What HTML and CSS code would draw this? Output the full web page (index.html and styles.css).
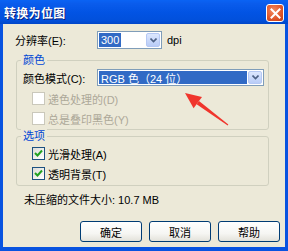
FILE: index.html
```html
<!DOCTYPE html>
<html>
<head>
<meta charset="utf-8">
<link rel="stylesheet" href="styles.css">
</head>
<body>
<div class="window">
  <div class="titlebar">
    <span class="title">转换为位图</span>
    <span class="close"><svg width="11" height="11" viewBox="0 0 11 11"><path d="M1.5 1.5 L9.5 9.5 M9.5 1.5 L1.5 9.5" stroke="#fff" stroke-width="2" stroke-linecap="square"/></svg></span>
  </div>
  <div class="content">
    <div class="row res">
      <span class="label">分辨率(E):</span>
      <div class="combo small"><span class="value sel">300</span><span class="drop"><svg width="7" height="5" viewBox="0 0 7 5"><path d="M0.5 0.5 L3.5 3.5 L6.5 0.5" fill="none" stroke="#4D6185" stroke-width="1.6"/></svg></span></div>
      <span class="unit">dpi</span>
    </div>
    <div class="group g1">
      <span class="legend">颜色</span>
      <div class="row mode">
        <span class="label">颜色模式(C):</span>
        <div class="combo wide"><span class="value sel full">RGB 色（24 位）</span><span class="drop"><svg width="7" height="5" viewBox="0 0 7 5"><path d="M0.5 0.5 L3.5 3.5 L6.5 0.5" fill="none" stroke="#4D6185" stroke-width="1.6"/></svg></span></div>
      </div>
      <div class="check disabled first"><span class="box"></span><span>递色处理的(D)</span></div>
      <div class="check disabled second"><span class="box"></span><span>总是叠印黑色(Y)</span></div>
    </div>
    <div class="group g2">
      <span class="legend">选项</span>
      <div class="check first"><span class="box"><svg width="9" height="9" viewBox="0 0 9 9"><path d="M1 4 L3.5 6.5 L8 1.5" fill="none" stroke="#21A121" stroke-width="2"/></svg></span><span>光滑处理(A)</span></div>
      <div class="check second"><span class="box"><svg width="9" height="9" viewBox="0 0 9 9"><path d="M1 4 L3.5 6.5 L8 1.5" fill="none" stroke="#21A121" stroke-width="2"/></svg></span><span>透明背景(T)</span></div>
    </div>
    <div class="size">未压缩的文件大小: 10.7 MB</div>
    <div class="buttons">
      <button class="btn">确定</button>
      <button class="btn">取消</button>
      <button class="btn">帮助</button>
    </div>
    <svg class="arrow" width="60" height="45" viewBox="180 88 60 45">
      <polygon points="185,93 202,97 193.6,108.2" fill="#F0352C"/>
      <polygon points="199,101 196.6,104.2 227.7,125.4 228.3,124.6" fill="#F0352C"/>
    </svg>
  </div>
</div>
</body>
</html>
```
FILE: styles.css
```css
* { box-sizing: border-box; }
html, body { margin: 0; padding: 0; }
body {
  width: 288px;
  height: 251px;
  overflow: hidden;
  font-family: "Liberation Sans", "Noto Sans CJK SC", sans-serif;
  font-size: 11px;
  color: #000;
}
.window {
  width: 288px;
  height: 251px;
  background: #0853E0;
  display: flex;
  flex-direction: column;
}
.titlebar {
  height: 24px;
  flex: none;
  background: linear-gradient(#0A63F4 0%, #0A5CEC 15%, #0254E4 50%, #0150DB 85%, #0046C8 100%);
  display: flex;
  align-items: center;
  justify-content: space-between;
  padding: 0 4px 0 4px;
}
.title {
  color: #fff;
  font-family: "Noto Sans CJK SC", sans-serif;
  font-weight: bold;
  font-size: 12px;
  text-shadow: 1px 1px 0 #0A1F7A;
  letter-spacing: 0.3px;
}
.close {
  width: 18px;
  height: 18px;
  border: 1px solid #fff;
  border-radius: 3px;
  background: radial-gradient(circle at 40% 35%, #F08A62 0%, #E2582C 55%, #C23A12 100%);
  display: flex;
  align-items: center;
  justify-content: center;
  margin-top: 2px;
}
.content {
  position: relative;
  flex: 1;
  margin: 0 3px 4px 3px;
  background: #ECE9D8;
  padding: 7px 0 0 0;
}
.row { display: flex; align-items: center; }
.res { height: 18px; padding-left: 12px; }
.label { width: 82px; }
.combo {
  height: 18px;
  border: 1px solid #7F9DB9;
  background: #fff;
  display: flex;
  align-items: center;
  padding: 1px;
}
.combo.small { width: 65px; }
.combo.wide { width: 167px; height: 17px; }
.value {
  flex: 1;
  height: 100%;
  display: flex;
  align-items: center;
  padding-left: 1px;
}
.sel { color: #fff; }
.small .sel { flex: none; background: #316AC5; padding: 0 2px; }
.full { background: #316AC5; margin-right: 1px; padding-left: 2px; }
.drop {
  width: 14px;
  height: 100%;
  background: linear-gradient(#DCE7FE, #B9CCF7);
  border: 1px solid #B5C8F4;
  border-radius: 2px;
  display: flex;
  align-items: center;
  justify-content: center;
  margin-left: auto;
}
.unit { margin-left: 5px; }
.group {
  margin: 11px 16px 0 13px;
  border: 1px solid #D0D0BF;
  border-radius: 3px;
  display: flex;
  flex-direction: column;
}
.legend {
  align-self: flex-start;
  margin: -8px 0 0 4px;
  padding: 0 2px;
  height: 14px;
  line-height: 14px;
  background: #ECE9D8;
  color: #0046D5;
}
.g1 { padding-bottom: 4px; }
.mode { margin-top: 2px; height: 17px; padding-left: 6px; }
.mode .label { width: 74px; }
.check {
  display: flex;
  align-items: center;
  height: 13px;
  padding-left: 15px;
  gap: 3px;
}
.check.first { margin-top: 6px; }
.check.second { margin-top: 7px; }
.box {
  width: 13px;
  height: 13px;
  border: 1px solid #1C5180;
  background: linear-gradient(135deg, #DCDCD7, #fff);
  display: flex;
  align-items: center;
  justify-content: center;
}
.disabled { color: #ACA899; }
.disabled .box { border-color: #CAC8BB; background: #fff; }
.g2 { margin-top: 6px; padding-bottom: 5px; }
.g2 .check.first { margin-top: 4px; }
.size { margin-top: 7px; height: 14px; line-height: 14px; padding-left: 21px; }
.buttons {
  display: flex;
  justify-content: flex-end;
  gap: 7px;
  margin-top: 14px;
  padding-right: 5px;
}
.btn {
  width: 62px;
  height: 21px;
  border: 1px solid #003C74;
  border-radius: 3px;
  background: linear-gradient(#FFFFFF 0%, #F6F6F3 60%, #E3E2DA 100%);
  font-family: "Noto Sans CJK SC", sans-serif;
  font-size: 11px;
  color: #000;
  padding: 0;
}
.arrow { position: absolute; left: 177px; top: 64px; }
```
